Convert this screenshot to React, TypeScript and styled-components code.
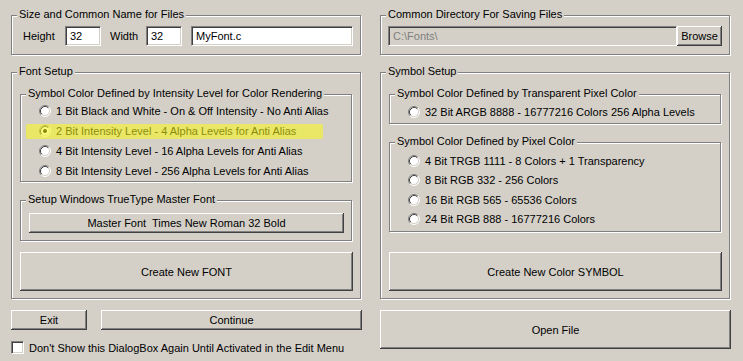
import React from "react";
import styled, { createGlobalStyle, css } from "styled-components";

const Global = createGlobalStyle`
  html, body { margin: 0; padding: 0; background: #d4d0c8; }
  body {
    font-family: "Liberation Sans", Arial, sans-serif;
    font-size: 11px;
    color: #000;
  }
  * { box-sizing: border-box; }
`;

const Dialog = styled.div`
  width: 743px;
  height: 361px;
  padding: 15px 0 0 11px;
  display: flex;
  gap: 18px;
  background: #d4d0c8;
  overflow: hidden;
`;

const Column = styled.div`
  width: 351px;
  display: flex;
  flex-direction: column;
  gap: 11px;
`;

const etched = css`
  position: relative;
  border: 1px solid #808080;
  box-shadow: inset 1px 1px 0 #fff, 1px 1px 0 #fff;
  margin-right: 1px;
`;

const Caption = styled.span`
  position: absolute;
  top: -8px;
  left: 5px;
  padding: 0 2px;
  line-height: 13px;
  background: #d4d0c8;
  white-space: nowrap;
`;

const TopGroup = styled.div<{ $pl: number }>`
  ${etched}
  height: 40px;
  margin-bottom: 6px;
  display: flex;
  align-items: flex-start;
  padding: 10px 7px 0 ${(p) => p.$pl}px;
`;

const Section = styled.div`
  ${etched}
  height: 227px;
  padding: 21px 7px 0 8px;
  display: flex;
  flex-direction: column;
`;

const SubGroup = styled.div<{ $h: number; $pt: number }>`
  ${etched}
  height: ${(p) => p.$h}px;
  padding-top: ${(p) => p.$pt}px;
  & + & { margin-top: 18px; }
`;

const FieldLabel = styled.span<{ $w: number }>`
  width: ${(p) => p.$w}px;
  height: 20px;
  line-height: 20px;
  flex: none;
`;

const Field = styled.input<{ $w?: number; $disabled?: boolean }>`
  font: inherit;
  height: 20px;
  width: ${(p) => (p.$w ? `${p.$w}px` : "auto")};
  flex: ${(p) => (p.$w ? "none" : "1")};
  min-width: 0;
  margin: 0;
  padding: 0 0 0 4px;
  border: 1px solid;
  border-color: #808080 #fff #fff #808080;
  box-shadow: inset 1px 1px 0 #404040, inset -1px -1px 0 #d4d0c8;
  background: ${(p) => (p.$disabled ? "#d4d0c8" : "#fff")};
  color: ${(p) => (p.$disabled ? "#808080" : "#000")};
  outline: none;
`;

const Spacer = styled.span<{ $w: number }>`
  width: ${(p) => p.$w}px;
  flex: none;
`;

const Button = styled.button<{ $w?: number; $h: number; $mt?: number }>`
  font: inherit;
  color: #000;
  white-space: pre;
  height: ${(p) => p.$h}px;
  width: ${(p) => (p.$w ? `${p.$w}px` : "auto")};
  flex: ${(p) => (p.$w ? "none" : "1")};
  margin: ${(p) => p.$mt ?? 0}px 0 0 0;
  padding: 0;
  border: none;
  background: #d4d0c8;
  box-shadow: inset -1px -1px 0 #404040, inset 1px 1px 0 #fff,
    inset -2px -2px 0 #808080;
  cursor: default;
`;

const WideButton = styled(Button)`
  width: 333px;
  flex: none;
`;

const OpenButton = styled(Button)`
  width: 351px;
  flex: none;
`;

const MasterBox = styled.div`
  display: flex;
  padding: 0 7px 0 8px;
`;

const Row = styled.label<{ $h: number; $hl?: boolean }>`
  position: relative;
  display: flex;
  align-items: center;
  height: ${(p) => p.$h}px;
  padding-left: 18px;
  white-space: nowrap;
  ${(p) =>
    p.$hl &&
    css`
      &::after {
        content: "";
        position: absolute;
        left: 5px;
        top: 3px;
        width: 297px;
        height: 15px;
        border-radius: 2px;
        background: rgba(250, 250, 20, 0.55);
        pointer-events: none;
      }
    `}
`;

const RowText = styled.span`
  margin-left: 5px;
`;

const ButtonRow = styled.div`
  display: flex;
  gap: 14px;
  height: 20px;
`;

const CheckRow = styled.label`
  display: flex;
  align-items: center;
  height: 13px;
`;

const CheckBox = styled.span`
  width: 13px;
  height: 13px;
  flex: none;
  background: #fff;
  border: 1px solid;
  border-color: #808080 #fff #fff #808080;
  box-shadow: inset 1px 1px 0 #404040, inset -1px -1px 0 #d4d0c8;
`;

const CheckText = styled.span`
  margin-left: 5px;
  white-space: nowrap;
`;

const Radio: React.FC<{ checked?: boolean }> = ({ checked }) => (
  <svg width="12" height="12" viewBox="0 0 12 12" style={{ flex: "none" }}>
    <circle cx="6" cy="6" r="5" fill="#fff" />
    <path d="M2.11 9.89 A5.5 5.5 0 0 1 9.89 2.11" fill="none" stroke="#808080" strokeWidth="1" />
    <path d="M9.89 2.11 A5.5 5.5 0 0 1 2.11 9.89" fill="none" stroke="#ffffff" strokeWidth="1" />
    <path d="M2.82 9.18 A4.5 4.5 0 0 1 9.18 2.82" fill="none" stroke="#404040" strokeWidth="1" />
    <path d="M9.18 2.82 A4.5 4.5 0 0 1 2.82 9.18" fill="none" stroke="#d4d0c8" strokeWidth="1" />
    {checked && <circle cx="6" cy="6" r="2" fill="#000" />}
  </svg>
);

const intensity = [
  "1 Bit Black and White - On & Off Intensity - No Anti Alias",
  "2 Bit Intensity Level - 4 Alpha Levels for Anti Alias",
  "4 Bit Intensity Level - 16 Alpha Levels for Anti Alias",
  "8 Bit Intensity Level - 256 Alpha Levels for Anti Alias",
];

const pixel = [
  "4 Bit TRGB 1111 - 8 Colors + 1 Transparency",
  "8 Bit RGB 332 - 256 Colors",
  "16 Bit RGB 565 - 65536 Colors",
  "24 Bit RGB 888 - 16777216 Colors",
];

export default function App() {
  return (
    <>
      <Global />
      <Dialog>
        <Column>
          <TopGroup $pl={11}>
            <Caption>Size and Common Name for Files</Caption>
            <FieldLabel $w={42}>Height</FieldLabel>
            <Field $w={36} defaultValue="32" />
            <Spacer $w={9} />
            <FieldLabel $w={36}>Width</FieldLabel>
            <Field $w={36} defaultValue="32" />
            <Spacer $w={9} />
            <Field defaultValue="MyFont.c" />
          </TopGroup>
          <Section>
            <Caption>Font Setup</Caption>
            <SubGroup $h={88} $pt={6}>
              <Caption>Symbol Color Defined by Intensity Level for Color Rendering</Caption>
              {intensity.map((t, i) => (
                <Row key={t} $h={20} $hl={i === 1}>
                  <Radio checked={i === 1} />
                  <RowText>{t}</RowText>
                </Row>
              ))}
            </SubGroup>
            <SubGroup $h={41} $pt={12}>
              <Caption>Setup Windows TrueType Master Font</Caption>
              <MasterBox>
                <Button $h={20}>{"Master Font  Times New Roman 32 Bold"}</Button>
              </MasterBox>
            </SubGroup>
            <WideButton $h={39} $mt={11}>Create New FONT</WideButton>
          </Section>
          <ButtonRow>
            <Button $w={76} $h={20}>Exit</Button>
            <Button $h={20}>Continue</Button>
          </ButtonRow>
          <CheckRow>
            <CheckBox />
            <CheckText>Don't Show this DialogBox Again Until Activated in the Edit Menu</CheckText>
          </CheckRow>
        </Column>
        <Column>
          <TopGroup $pl={7}>
            <Caption>Common Directory For Saving Files</Caption>
            <Field $disabled readOnly defaultValue="C:\Fonts\" />
            <Button $w={45} $h={20}>Browse</Button>
          </TopGroup>
          <Section>
            <Caption>Symbol Setup</Caption>
            <SubGroup $h={30} $pt={7}>
              <Caption>Symbol Color Defined by Transparent Pixel Color</Caption>
              <Row $h={20}>
                <Radio />
                <RowText>32 Bit ARGB 8888 - 16777216 Colors 256 Alpha Levels</RowText>
              </Row>
            </SubGroup>
            <SubGroup $h={90} $pt={8}>
              <Caption>Symbol Color Defined by Pixel Color</Caption>
              {pixel.map((t) => (
                <Row key={t} $h={19.5}>
                  <Radio />
                  <RowText>{t}</RowText>
                </Row>
              ))}
            </SubGroup>
            <WideButton $h={39} $mt={20}>Create New Color SYMBOL</WideButton>
          </Section>
          <OpenButton $h={39}>Open File</OpenButton>
        </Column>
      </Dialog>
    </>
  );
}
